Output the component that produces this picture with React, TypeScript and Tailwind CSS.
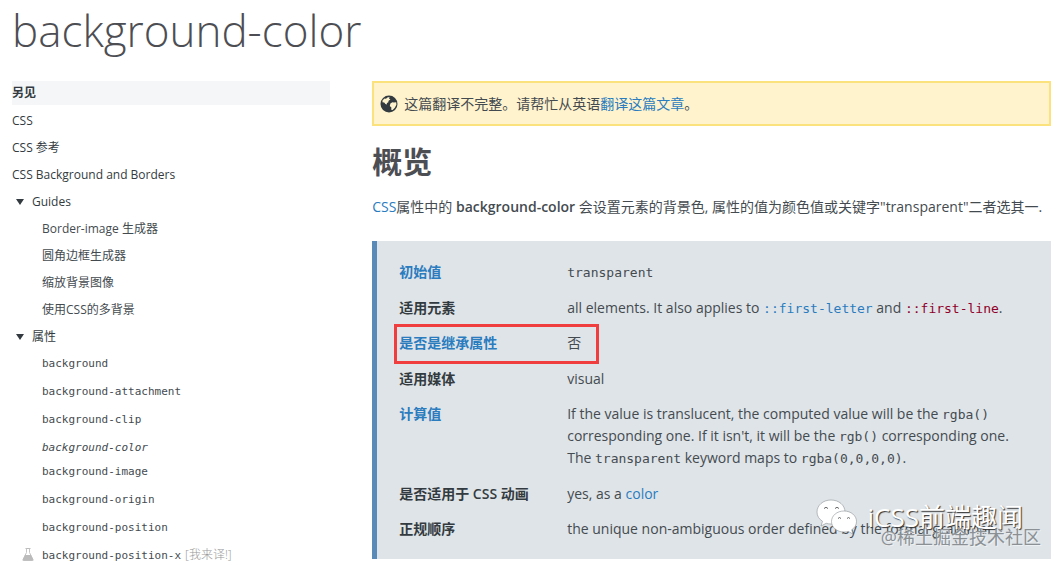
import type { ReactNode } from 'react';

interface PropertyRow {
  label: string;
  linked?: boolean;
  highlighted?: boolean;
  value: ReactNode;
}

const linkClass = 'text-[#2a7cbf] hover:underline';

// Inline code, must not make its line taller
function Code({ children }: { children: ReactNode }) {
  return <code className="font-['DejaVu_Sans_Mono',monospace] text-[13px] leading-none">{children}</code>;
}

const topLinks = ['CSS', 'CSS 参考', 'CSS Background and Borders'];

const guides = ['Border-image 生成器', '圆角边框生成器', '缩放背景图像', '使用CSS的多背景'];

const properties = [
  { name: 'background' },
  { name: 'background-attachment' },
  { name: 'background-clip' },
  { name: 'background-color', current: true },
  { name: 'background-image' },
  { name: 'background-origin' },
  { name: 'background-position' },
  { name: 'background-position-x', experimental: true },
];

const rows: PropertyRow[] = [
  { label: '初始值', linked: true, value: <Code>transparent</Code> },
  {
    label: '适用元素',
    value: (
      <>
        all elements. It also applies to{' '}
        <a href="#first-letter" className={linkClass}><Code>::first-letter</Code></a> and{' '}
        <a href="#first-line" className="text-[#900028]"><Code>::first-line</Code></a>.
      </>
    ),
  },
  { label: '是否是继承属性', linked: true, highlighted: true, value: '否' },
  { label: '适用媒体', value: 'visual' },
  {
    label: '计算值',
    linked: true,
    value: (
      <>
        If the value is translucent, the computed value will be the <Code>rgba()</Code> corresponding one.
        If it isn't, it will be the <Code>rgb()</Code> corresponding one. The <Code>transparent</Code> keyword
        maps to <Code>rgba(0,0,0,0)</Code>.
      </>
    ),
  },
  {
    label: '是否适用于 CSS 动画',
    value: <>yes, as a <a href="#color" className={linkClass}>color</a></>,
  },
  { label: '正规顺序', value: 'the unique non-ambiguous order defined by the formal grammar' },
];

function GlobeIcon() {
  return (
    <svg viewBox="0 0 18 18" className="size-[18px] shrink-0" aria-hidden="true">
      <circle cx="9" cy="9" r="8.5" fill="#333b40" />
      <path d="M2.6 5.2 4.6 3.4 6 3.8 7.4 2.4 9.6 2 9 3.4 10.4 4.4 8.6 5.8 8.2 7.4 6.8 8 7 9.4 5.4 9 4.2 7.4 2.4 7.2Z" fill="#fff3cd" />
      <path d="M10.4 8.6 12.4 7.2 14 7.6 16.2 7.2 16.4 9.8 14.8 12.8 12.6 15 11.2 14.8 11.4 12.6 9.8 11Z" fill="#fff3cd" />
    </svg>
  );
}

function FlaskIcon() {
  return (
    <svg viewBox="0 0 12 13" className="h-[13px] w-3" aria-hidden="true">
      <path d="M3.5.5h5" stroke="#bbb" />
      <path d="M4.5.5v4L1 11.5q-.3 1 .8 1h8.4q1.100 0 .8-1L7.5 4.5v-4" fill="none" stroke="#c4c4c4" />
      <path d="M3 7h6l2.500 5.500H.5Z" fill="#bbb" />
    </svg>
  );
}

function WechatIcon() {
  return (
    <svg viewBox="0 0 42 36" className="h-9 w-[42px] shrink-0" aria-hidden="true">
      <g fill="#fff" stroke="#8d9296" strokeWidth=".6">
        <path d="M15 1C7 1 1 6.3 1 13c0 4 2 7 5.5 9.3L5 27l5.2-2.7q2.3.7 4.8.7c8 0 14-5.3 14-12S23 1 15 1Z" />
        <path d="M28 12c-7 0-12.5 4.6-12.5 10.5S21 33 28 33q2.3 0 4.3-.6L37 35l-1.3-4.2c3-1.9 4.800-4.900 4.800-8.300C40.5 16.6 35 12 28 12Z" />
      </g>
      <g fill="none" stroke="#666" strokeWidth="1">
        <path d="M8 9.5q2-2.500 4 0M19 9.5q2-2.500 4 0M22 19.5q1.500-2 3 0M31 19.5q1.500-2 3 0" />
      </g>
    </svg>
  );
}

function SidebarGroup({ title, children }: { title: string; children: ReactNode }) {
  return (
    <details open>
      <summary className="flex h-[27px] cursor-pointer list-none items-center gap-2 pl-1">
        <svg viewBox="0 0 8 6" className="h-1.5 w-2" aria-hidden="true">
          <path d="M0 0h8L4 6Z" fill="currentColor" />
        </svg>
        {title}
      </summary>
      <ul className="pl-[30px] text-[#444b50]">{children}</ul>
    </details>
  );
}

function Sidebar() {
  return (
    <nav className="text-xs leading-[27px] text-[#333b40]">
      <h2 className="mb-0.5 bg-[#f4f6f8] font-bold leading-6">另见</h2>
      <ul>
        {topLinks.map((text) => (
          <li key={text}><a href="#reference">{text}</a></li>
        ))}
      </ul>
      <SidebarGroup title="Guides">
        {guides.map((text) => (
          <li key={text}><a href="#guide">{text}</a></li>
        ))}
      </SidebarGroup>
      <SidebarGroup title="属性">
        {properties.map((property) => (
          <li
            key={property.name}
            className={`relative h-7 font-['DejaVu_Sans_Mono',monospace] text-[11px] leading-7 ${property.current ? '-mb-1' : ''}`}
          >
            {property.experimental && (
              <span className="absolute -left-5 top-1.5 leading-none"><FlaskIcon /></span>
            )}
            {property.current ? <em>{property.name}</em> : <a href="#property">{property.name}</a>}
            {property.experimental && (
              <a href="#translate" className="ml-1 font-['Open_Sans','Noto_Sans_CJK_SC',sans-serif] text-xs font-light leading-4 text-[#999]">[我来译!]</a>
            )}
          </li>
        ))}
      </SidebarGroup>
    </nav>
  );
}

export default function App() {
  return (
    <div className="pr-[7px] pl-3 font-['Open_Sans','Noto_Sans_CJK_SC',sans-serif] text-sm leading-[22px] text-[#444b50]">
      <h1 className="pb-[21px] text-[44px] font-light leading-15 text-[#4d4e53]">background-color</h1>

      <div className="grid grid-cols-[15fr_32fr] gap-[42px]">
        <Sidebar />

        <main className="min-w-0">
          {/* Translation notice */}
          <div className="flex h-[45px] items-center gap-1.5 border-2 border-[#fbe27c] bg-[#fff3cd] px-1.5">
            <GlobeIcon />
            <p>这篇翻译不完整。请帮忙从英语<a href="#translate" className={linkClass}>翻译这篇文章</a>。</p>
          </div>

          <h2 className="pt-4 text-3xl font-bold leading-10 text-[#4d4e53]">概览</h2>
          <p className="mt-[14px] mb-[23px] whitespace-nowrap">
            <a href="#css" className={linkClass}>CSS</a>属性中的 <strong className="font-semibold">background-color</strong>{' '}
            会设置元素的背景色, 属性的值为颜色值或关键字"transparent"二者选其一.
          </p>

          {/* Property summary */}
          <div className="relative border-l-5 border-[#5a8bb8] bg-[#dfe4e8] pt-[13px] pb-3 pr-9 pl-[22px]">
            <table className="w-full text-left">
              <tbody>
                {rows.map((row) => (
                  <tr key={row.label} className="align-top even:[&>*]:pb-1.5">
                    <th scope="row" className="relative w-[168px] py-[7px] font-semibold text-[#333b40]">
                      {row.linked ? <a href="#definition" className={linkClass}>{row.label}</a> : row.label}
                      {row.highlighted && (
                        <span className="absolute -top-px -left-[5px] h-10 w-[205px] border-3 border-[#f03e3e]" />
                      )}
                    </th>
                    <td className="py-[7px]">{row.value}</td>
                  </tr>
                ))}
              </tbody>
            </table>

            {/* Watermarks */}
            <div className="pointer-events-none absolute right-7 bottom-6 flex items-center gap-2.5">
              <WechatIcon />
              <span className="text-[26px] leading-9 text-white [text-shadow:1px_1px_1px_#333]">iCSS前端趣闻</span>
            </div>
            <div className="pointer-events-none absolute right-2.5 bottom-2.5 text-lg leading-6 text-[#8b9095] [text-shadow:1px_1px_0_#eef1f3]">
              @稀土掘金技术社区
            </div>
          </div>
        </main>
      </div>
    </div>
  );
}
